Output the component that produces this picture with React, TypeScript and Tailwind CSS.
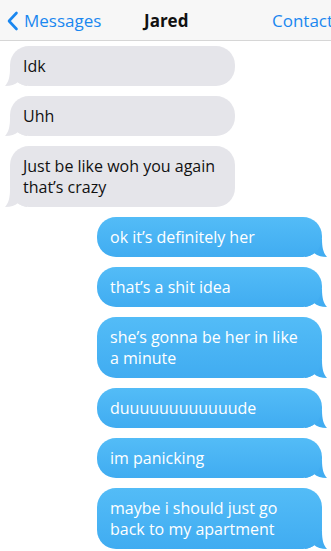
import React from "react";

const font = { fontFamily: '"Open Sans", "Noto Sans", sans-serif' };

function Gray({ children }: { children: React.ReactNode }) {
  return (
    <div className="relative ml-[10px] w-[225px]">
      <div className="relative z-10 rounded-[19px] bg-[#e5e5ea] pl-[13px] pr-3 pt-[10px] pb-[9px] text-[16px] leading-[21px] text-[#111]">
        {children}
      </div>
      <svg className="absolute left-[-5px] bottom-0 z-0" width="22" height="18" viewBox="0 0 22 18">
        <path d="M5 0 C5 9 3.5 14 0 18 C6 18 10 16.5 13 14 C15 16 18 17.5 22 18 L22 0 Z" fill="#e5e5ea" />
      </svg>
    </div>
  );
}

function Blue({ children }: { children: React.ReactNode }) {
  return (
    <div className="relative mr-[9px] w-[225px] self-end">
      <div className="relative z-10 rounded-[19px] bg-gradient-to-b from-[#53bcf7] to-[#40acf1] pl-[13px] pr-3 pt-[10px] pb-[9px] text-[16px] leading-[21px] text-white">
        {children}
      </div>
      <svg className="absolute right-[-5px] bottom-0 z-0" width="22" height="18" viewBox="0 0 22 18">
        <path d="M17 0 C17 9 18.5 14 22 18 C16 18 12 16.5 9 14 C7 16 4 17.5 0 18 L0 0 Z" fill="#41acf1" />
      </svg>
    </div>
  );
}

export default function App() {
  return (
    <div className="w-[331px] h-[551px] bg-white overflow-hidden" style={font}>
      <div className="h-[41px] bg-[#f7f7f7] border-b border-[#d6d6d6] relative flex items-center">
        <div className="flex items-center pl-[6px] text-[#1a87f0]">
          <svg width="13" height="20" viewBox="0 0 13 20" className="mt-[1px]">
            <path d="M10.5 2 L3 10 L10.5 18" fill="none" stroke="#1a87f0" strokeWidth="2.6" strokeLinecap="round" strokeLinejoin="round" />
          </svg>
          <span className="ml-[5px] text-[17px] leading-none">Messages</span>
        </div>
        <div className="absolute left-[144px] top-0 h-full flex items-center text-[17px] font-bold text-[#111] leading-none">Jared</div>
        <div className="absolute left-[272px] top-0 h-full flex items-center text-[17px] text-[#1a87f0] leading-none whitespace-nowrap">Contact</div>
      </div>
      <div className="flex flex-col gap-[10px] pt-[5px]">
        <Gray>Idk</Gray>
        <Gray>Uhh</Gray>
        <Gray>Just be like woh you again that’s crazy</Gray>
        <Blue>ok it’s definitely her</Blue>
        <Blue>that’s a shit idea</Blue>
        <Blue>she’s gonna be her in like a minute</Blue>
        <Blue>duuuuuuuuuuuude</Blue>
        <Blue>im panicking</Blue>
        <Blue>maybe i should just go back to my apartment</Blue>
      </div>
    </div>
  );
}
